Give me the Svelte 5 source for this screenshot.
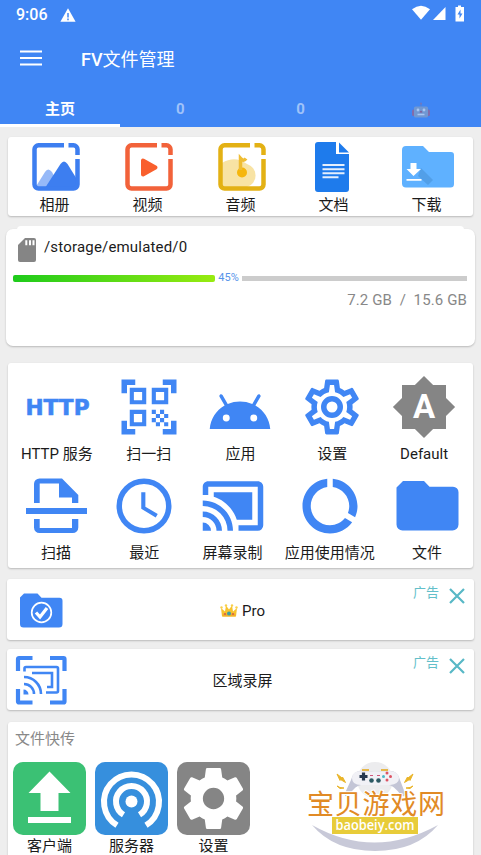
<script>
	/**
	 * @typedef {Object} Entry
	 * @property {string} icon - Icon name, see the icon snippet
	 * @property {string} label - Text under the icon
	 */

	/** @type {Entry[]} */
	const media = [
		{ icon: 'album', label: '相册' },
		{ icon: 'video', label: '视频' },
		{ icon: 'audio', label: '音频' },
		{ icon: 'document', label: '文档' },
		{ icon: 'download', label: '下载' },
	];

	/** @type {Entry[][]} */
	const tools = [
		[
			{ icon: 'http', label: 'HTTP 服务' },
			{ icon: 'qr', label: '扫一扫' },
			{ icon: 'android', label: '应用' },
			{ icon: 'settings', label: '设置' },
			{ icon: 'brightness', label: 'Default' },
		],
		[
			{ icon: 'scan', label: '扫描' },
			{ icon: 'clock', label: '最近' },
			{ icon: 'cast', label: '屏幕录制' },
			{ icon: 'usage', label: '应用使用情况' },
			{ icon: 'folder', label: '文件' },
		],
	];

	const transfer = [
		{ icon: 'upload', label: '客户端', tone: 'green' },
		{ icon: 'hotspot', label: '服务器', tone: 'blue' },
		{ icon: 'gear', label: '设置', tone: 'gray' },
	];

	const tabs = ['主页', '0', '0', 'robot'];
	let activeTab = $state(0);
	let ads = $state([
		{ id: 'pro', icon: 'folderCheck', label: 'Pro' },
		{ id: 'region', icon: 'regionCast', label: '区域录屏' },
	]);

	const storage = { path: '/storage/emulated/0', used: 7.2, total: 15.6, percent: 45 };

	/** @param {string} id */
	function closeAd(id) {
		ads = ads.filter((ad) => ad.id !== id);
	}
</script>

{#snippet frame(color)}
	<path
		d="M32 2.300H6.500a4 4 0 0 0-4 4v35.200a4 4 0 0 0 4 4h35a4 4 0 0 0 4-4V16M36.500 2.300H41.500a4 4 0 0 1 4 4V12"
		fill="none"
		stroke={color}
		stroke-width="4.500" />
{/snippet}

{#snippet icon(name)}
	{#if name === 'album'}
		<svg width="48" height="48" viewBox="0 0 48 48">
			<path d="M3 45 13 29q3-5 7 0l8 16z" fill="#96b9f8" />
			<path d="M13 45 28.500 21q3.500-5 7 0L46 38v7z" fill="#3d7ef0" />
			{@render frame('#3d7ef0')}
		</svg>
	{:else if name === 'video'}
		<svg width="48" height="48" viewBox="0 0 48 48">
			{@render frame('#f2623a')}
			<path d="M18 17.500v14l12.500-7z" fill="#f95f2d" stroke="#f95f2d" stroke-width="4" stroke-linejoin="round" />
		</svg>
	{:else if name === 'audio'}
		<svg width="48" height="48" viewBox="0 0 48 48">
			<path d="M4 20q13-8 25 1a12 12 0 0 1 0 23H4z" fill="#f8e3a4" />
			{@render frame('#e3b114')}
			<circle cx="24" cy="29.500" r="5" fill="#f6b60c" />
			<path d="M22.500 27V15.500q3 3.500 5.500 0" fill="none" stroke="#efbd33" stroke-width="3.500" />
		</svg>
	{:else if name === 'document'}
		<svg width="48" height="50" viewBox="0 0 48 50">
			<path d="M8 0h18v12h13v35a3 3 0 0 1-3 3H8a3 3 0 0 1-3-3V3a3 3 0 0 1 3-3z" transform="translate(-1 0)" fill="#1e7bec" />
			<path d="m28 0.500 10 10H28z" fill="#1e7bec" />
			<path d="M11.500 23h22M11.500 27.300h22M11.500 31.300h22M11.500 35.300h16" stroke="#e4effd" stroke-width="2" />
		</svg>
	{:else if name === 'download'}
		<svg width="52" height="42" viewBox="0 0 52 42">
			<path d="M4 0h17l6 6h22a3 3 0 0 1 3 3v29a3.500 3.500 0 0 1-3.500 3.500H4A4 4 0 0 1 0 37.500V4a4 4 0 0 1 4-4z" fill="#5fb1ff" />
			<path d="m19 22 12 12-5 5-10-9z" fill="#529fe8" />
			<path d="M8.500 17h6v6H19l-7.500 7L4.500 23h4zM4.500 33h15v1.700h-15z" fill="#fff" />
		</svg>
	{:else if name === 'http'}
		<svg width="66" height="66" viewBox="0 0 66 66">
			<text class="http" x="1.500" y="41" textLength="64" lengthAdjust="spacingAndGlyphs">HTTP</text>
		</svg>
	{:else if name === 'qr'}
		<svg width="66" height="66" viewBox="0 0 24 24" fill="currentColor">
			<path
				d="M9.500 6.500v3h-3v-3h3M11 5H5v6h6V5zm-1.500 9.500v3h-3v-3h3M11 13H5v6h6v-6zm6.500-6.500v3h-3v-3h3M19 5h-6v6h6V5zM13 13h1.500v1.500H13zM14.500 14.500H16V16h-1.500zM16 13h1.500v1.500H16zM13 16h1.500v1.500H13zM14.500 17.500H16V19h-1.500zM16 16h1.500v1.500H16zM17.500 14.500H19V16h-1.500zM17.500 17.500H19V19h-1.500zM22 7h-2V4h-3V2h5v5zm0 15v-5h-2v3h-3v2h5zM2 22h5v-2H4v-3H2v5zM2 2v5h2V4h3V2H2z" />
		</svg>
	{:else if name === 'android'}
		<svg width="66" height="66" viewBox="0 -2 24 24" fill="currentColor">
			<path
				d="M17.600 9.480l1.840-3.180c.16-.31.04-.69-.26-.85-.29-.15-.65-.06-.83.22l-1.880 3.240c-2.860-1.210-6.080-1.210-8.940 0L5.650 5.670c-.19-.29-.58-.38-.87-.2-.28.18-.37.54-.22.83L6.400 9.480C3.300 11.250 1.280 14.440 1 18h22c-.28-3.560-2.300-6.750-5.400-8.520z" />
			<circle cx="7" cy="14" r="1.250" fill="#fff" />
			<circle cx="17" cy="14" r="1.250" fill="#fff" />
		</svg>
	{:else if name === 'settings'}
		<svg width="66" height="66" viewBox="0 0 24 24" fill="currentColor">
			<path
				d="M12,8A4,4 0 0,1 16,12A4,4 0 0,1 12,16A4,4 0 0,1 8,12A4,4 0 0,1 12,8M12,10A2,2 0 0,0 10,12A2,2 0 0,0 12,14A2,2 0 0,0 14,12A2,2 0 0,0 12,10M10,22C9.75,22 9.54,21.82 9.5,21.58L9.13,18.93C8.5,18.68 7.96,18.34 7.44,17.94L4.95,18.95C4.73,19.03 4.46,18.95 4.34,18.73L2.34,15.27C2.21,15.05 2.27,14.78 2.46,14.63L4.57,12.97L4.5,12L4.57,11L2.46,9.37C2.27,9.22 2.21,8.95 2.34,8.73L4.34,5.27C4.46,5.05 4.73,4.96 4.95,5.05L7.44,6.05C7.96,5.66 8.5,5.32 9.13,5.07L9.5,2.42C9.54,2.18 9.75,2 10,2H14C14.25,2 14.46,2.18 14.5,2.42L14.87,5.07C15.5,5.32 16.04,5.66 16.56,6.05L19.05,5.05C19.27,4.96 19.54,5.05 19.66,5.27L21.66,8.73C21.79,8.95 21.73,9.22 21.54,9.37L19.43,11L19.5,12L19.43,13L21.54,14.63C21.73,14.78 21.79,15.05 21.66,15.27L19.66,18.73C19.54,18.95 19.27,19.04 19.05,18.95L16.56,17.95C16.04,18.34 15.5,18.68 14.87,18.93L14.5,21.58C14.46,21.82 14.25,22 14,22H10M11.25,4L10.88,6.61C9.68,6.86 8.62,7.5 7.85,8.39L5.44,7.35L4.69,8.65L6.8,10.2C6.4,11.37 6.4,12.64 6.8,13.8L4.68,15.36L5.43,16.66L7.86,15.62C8.63,16.5 9.68,17.14 10.87,17.38L11.24,20H12.76L13.13,17.39C14.32,17.14 15.37,16.5 16.14,15.62L18.57,16.66L19.32,15.36L17.2,13.81C17.6,12.64 17.6,11.37 17.2,10.2L19.31,8.65L18.56,7.35L16.15,8.39C15.38,7.5 14.32,6.86 13.12,6.62L12.75,4H11.25Z" />
		</svg>
	{:else if name === 'brightness'}
		<svg width="66" height="66" viewBox="0 0 66 66">
			<path d="M55 23.900V11H42.100L33 1.900 23.900 11H11v12.900L1.900 33l9.100 9.100V55h12.900l9.100 9.100 9.100-9.100H55V42.100l9.100-9.100z" fill="#858585" />
			<text class="auto" x="33" y="44" text-anchor="middle">A</text>
		</svg>
	{:else if name === 'scan'}
		<svg width="66" height="66" viewBox="0 0 66 66" fill="currentColor">
			<path d="M11 30V11a5.500 5.500 0 0 1 5.500-5.500H39L55.300 22v8H49v-5.500H36v-14H16.700V30zM3 35h61v6H3zM11 46h5.700v9H49v-9h6.300v8.500a5.500 5.500 0 0 1-5.500 5.500H16.500a5.500 5.500 0 0 1-5.500-5.500z" />
		</svg>
	{:else if name === 'clock'}
		<svg width="66" height="66" viewBox="0 0 24 24" fill="currentColor">
			<circle cx="12" cy="12" r="9" fill="none" stroke="currentColor" stroke-width="2" />
			<path d="M12.500 7v5.250L17 14.920l-.75 1.230L11 13V7z" />
		</svg>
	{:else if name === 'cast'}
		<svg width="66" height="66" viewBox="0 0 24 24" fill="currentColor">
			<path
				d="M21,3H3C1.89,3 1,3.89 1,5V8H3V5H21V19H14V21H21A2,2 0 0,0 23,19V5C23,3.89 22.1,3 21,3M1,10V12A9,9 0 0,1 10,21H12C12,14.92 7.07,10 1,10M19,7H5V8.63C8.96,9.91 12.09,13.04 13.37,17H19M1,14V16A5,5 0 0,1 6,21H8A7,7 0 0,0 1,14M1,18V21H4A3,3 0 0,0 1,18Z" />
		</svg>
	{:else if name === 'usage'}
		<svg width="66" height="66" viewBox="0 0 24 24" fill="currentColor">
			<path
				d="M13 2.050v3.030c3.390.49 6 3.390 6 6.920 0 .9-.18 1.750-.48 2.540l2.600 1.530c.56-1.240.88-2.620.88-4.070 0-5.180-3.950-9.450-9-9.950zM12 19c-3.870 0-7-3.130-7-7 0-3.530 2.610-6.430 6-6.920V2.050c-5.060.5-9 4.760-9 9.950 0 5.520 4.470 10 9.990 10 3.310 0 6.240-1.610 8.060-4.090l-2.600-1.530C16.170 17.980 14.210 19 12 19z" />
		</svg>
	{:else if name === 'folder'}
		<svg width="66" height="66" viewBox="0 0 66 66" fill="currentColor">
			<path d="M9 8h21l5.500 5.700H59a5.500 5.500 0 0 1 5.500 5.500V51.500a6 6 0 0 1-6 6H8.500a6 6 0 0 1-6-6V14.500z" />
		</svg>
	{:else if name === 'folderCheck'}
		<svg width="54" height="54" viewBox="0 0 54 54">
			<path d="M10 10.500h13.500l4 4.300h18a3 3 0 0 1 3 3v23.200a3.500 3.500 0 0 1-3.500 3.500H9.500a3.500 3.500 0 0 1-3.500-3.500V14.500z" fill="currentColor" />
			<circle cx="27.500" cy="29.500" r="9.800" fill="none" stroke="#fff" stroke-width="1.700" />
			<path d="m22 29.500 4 4.500 7-9" fill="none" stroke="#fff" stroke-width="3.200" />
		</svg>
	{:else if name === 'regionCast'}
		<svg width="54" height="54" viewBox="0 0 54 54" fill="none" stroke="currentColor">
			<path d="M4 18V6a1 1 0 0 1 1-1H18.500M36 5h13.500a1 1 0 0 1 1 1V18M50.500 36v12.500a1 1 0 0 1-1 1H36M18.500 49.500H5a1 1 0 0 1-1-1V36" stroke-width="4.200" />
			<path d="M10.500 18.500V15.500q0-1.500 1.500-1.500h30.500q1.500 0 1.500 1.500V38q0 1.500-1.500 1.500H32M18 20h20v14H33" stroke-width="2.600" />
			<path d="M10 24a17 17 0 0 1 17 17M10 31a10 10 0 0 1 10 10" stroke-width="2.600" />
			<path d="M9.500 36.500a5 5 0 0 1 5 5H9.500z" fill="currentColor" stroke="none" />
		</svg>
	{:else if name === 'upload'}
		<svg width="73" height="73" viewBox="0 0 73 73" fill="#fff">
			<path d="m36.500 9.500 21 21.500H45.500v18h-18V31h-12zM15 55h43v6H15z" />
		</svg>
	{:else if name === 'hotspot'}
		<svg width="73" height="73" viewBox="0 0 73 73" fill="none" stroke="#fff" stroke-width="6">
			<path d="M22 63.300a27.500 27.500 0 1 1 29 0M28.500 52.800a15.500 15.500 0 1 1 16 0" />
			<circle cx="36.500" cy="39.500" r="6" fill="#fff" stroke="none" />
		</svg>
	{:else if name === 'gear'}
		<svg width="73" height="73" viewBox="0 0 24 24" fill="#fff">
			<path
				fill-rule="evenodd"
				d="M12 8.500a3.500 3.500 0 1 0 0 7 3.500 3.500 0 0 0 0-7M10 22C9.750 22 9.540 21.820 9.500 21.580L9.130 18.930C8.500 18.680 7.960 18.340 7.440 17.940L4.950 18.950C4.730 19.030 4.460 18.950 4.340 18.730L2.340 15.270C2.210 15.050 2.270 14.780 2.460 14.630L4.570 12.970L4.500 12L4.570 11L2.460 9.370C2.270 9.220 2.210 8.950 2.340 8.730L4.340 5.270C4.460 5.050 4.730 4.960 4.950 5.050L7.440 6.050C7.960 5.660 8.500 5.320 9.130 5.070L9.500 2.420C9.540 2.180 9.750 2 10 2H14C14.250 2 14.460 2.180 14.500 2.420L14.870 5.070C15.500 5.320 16.040 5.660 16.560 6.050L19.050 5.050C19.270 4.960 19.540 5.050 19.660 5.270L21.660 8.730C21.790 8.950 21.730 9.220 21.540 9.370L19.430 11L19.500 12L19.430 13L21.540 14.630C21.730 14.780 21.790 15.050 21.660 15.270L19.660 18.730C19.540 18.950 19.270 19.040 19.050 18.950L16.560 17.950C16.040 18.340 15.500 18.680 14.870 18.930L14.500 21.580C14.460 21.820 14.250 22 14 22z" />
		</svg>
	{:else if name === 'crown'}
		<svg class="crown" width="18" height="14" viewBox="0 0 18 14">
			<path d="M2 12.500 1 4l4 3.500L6 1.500l3 4 3-4 1 6L17 4l-1 8.500z" fill="#f7c32e" />
			<path d="M2.500 9.500h13v3h-13z" fill="#f0b02a" />
			<circle cx="9" cy="9.500" r="2" fill="#3b9fa8" />
			<circle cx="5" cy="10" r="1" fill="#d65a48" />
			<circle cx="13" cy="10" r="1" fill="#d65a48" />
			<circle cx="1.500" cy="3.500" r="1.200" fill="#f9cf4a" />
			<circle cx="6" cy="1.500" r="1.200" fill="#f9cf4a" />
			<circle cx="12" cy="1.500" r="1.200" fill="#f9cf4a" />
			<circle cx="16.500" cy="3.500" r="1.200" fill="#f9cf4a" />
		</svg>
	{:else if name === 'robot'}
		<svg class="robot" width="18" height="16" viewBox="0 0 18 16">
			<path d="M9 2v3" stroke="#6d7fae" />
			<circle cx="9" cy="1.500" r="1" fill="#8a6fa8" />
			<rect x="0" y="7.500" width="18" height="6.500" rx="1.500" fill="#a0628c" />
			<rect x="2" y="4.500" width="14" height="11" rx="1.500" fill="#86a0c4" />
			<circle cx="6" cy="8" r="1.400" fill="#d5e3f5" />
			<circle cx="12" cy="8" r="1.400" fill="#d5e3f5" />
			<path d="m9 8.500 1.500 2h-3z" fill="#a33f62" />
			<path d="M5.500 12.500h7" stroke="#d5e3f5" stroke-width="1.500" />
		</svg>
	{/if}
{/snippet}

<div class="screen">
	<header>
		<div class="status">
			<span class="time">9:06</span>
			<svg width="16" height="14" viewBox="0 0 16 14">
				<path d="M8 .3 15.600 13.700H.4z" fill="#fff" />
				<path d="M8 5v4.500M8 10.500v1.700" stroke="#4086f4" stroke-width="1.500" />
			</svg>
			<svg class="signals" width="52" height="17" viewBox="0 0 52 17" fill="#fff">
				<path d="M0 4.200q9-7 18 0L9 14.800z" />
				<path d="M33.500 2v13H21z" />
				<path d="M46 .5h3V2h3v14.500h-8.500V2H46z" />
				<path d="m48.500 4.500-3 5h2v4l3-5h-2z" fill="#4086f4" />
			</svg>
		</div>
		<div class="toolbar">
			<button aria-label="菜单">
				<svg width="22" height="16" viewBox="0 0 22 16">
					<path d="M0 1.500h22M0 8h22M0 14.500h22" stroke="#fff" stroke-width="2.200" />
				</svg>
			</button>
			<h1>FV<span>文件管理</span></h1>
		</div>
		<nav>
			{#each tabs as tab, i}
				<button class:active={activeTab === i} onclick={() => (activeTab = i)}>
					{#if tab === 'robot'}
						{@render icon('robot')}
					{:else}
						{tab}
					{/if}
				</button>
			{/each}
		</nav>
	</header>

	<main>
		<section class="card media">
			{#each media as item}
				<div class="item">
					<div class="pic">{@render icon(item.icon)}</div>
					<span>{item.label}</span>
				</div>
			{/each}
		</section>

		<section class="card storage">
			<div class="path">
				<svg width="18" height="24" viewBox="0 0 18 24">
					<path d="M7 0h9a2 2 0 0 1 2 2v20a2 2 0 0 1-2 2H2a2 2 0 0 1-2-2V7z" fill="#858585" />
					<path d="M8.300 2.200v5M12 2.200v5M15.500 2.200v5" stroke="#fff" stroke-width="2" />
				</svg>
				<span>{storage.path}</span>
			</div>
			<div class="bar">
				<div class="used" style="width:{storage.percent * 0.988}%"></div>
				<span>{storage.percent}%</span>
				<div class="free"></div>
			</div>
			<p>{storage.used} GB&nbsp; /&nbsp; {storage.total} GB</p>
		</section>

		<section class="card tools">
			{#each tools as row}
				<div class="row">
					{#each row as item}
						<div class="item">
							{@render icon(item.icon)}
							<span>{item.label}</span>
						</div>
					{/each}
				</div>
			{/each}
		</section>

		{#each ads as ad (ad.id)}
			<section class="card ad">
				<div class="lead">{@render icon(ad.icon)}</div>
				<div class="name">
					{#if ad.id === 'pro'}{@render icon('crown')}{/if}
					<span>{ad.label}</span>
				</div>
				<div class="tag">
					<span>广告</span>
					<button aria-label="关闭" onclick={() => closeAd(ad.id)}>
						<svg width="16" height="16" viewBox="0 0 16 16">
							<path d="m1 1 14 14M15 1 1 15" stroke="#58b8c6" stroke-width="2.200" />
						</svg>
					</button>
				</div>
			</section>
		{/each}

		<section class="card transfer">
			<h2>文件快传</h2>
			<div class="tiles">
				{#each transfer as item}
					<div class="item">
						<div class="tile {item.tone}">{@render icon(item.icon)}</div>
						<span>{item.label}</span>
					</div>
				{/each}
			</div>
		</section>
	</main>

	<!-- site badge floating over the last card -->
	<svg class="badge" width="146" height="92" viewBox="0 0 146 92">
		<path d="M7 66q62 35 126 0Q111 92 70 92T7 66z" fill="#c8c9d8" />
		<circle cx="70" cy="21" r="18" fill="#ececee" />
		<path d="M57 11h7M76 11h7" stroke="#e6b84b" stroke-width="2" />
		<path d="M56 12q14 2 29 0 8 0 10 9l5 13q0 5-4 2-8-10-12-10H56q-5 0-12 10-5 3-4-2l6-13q2-9 10-9z" fill="#c3c5d6" />
		<path d="M56 12q14 2 29 0 9 1 9 7t-9 7H56q-9 0-9-7t9-7z" fill="#f1f1f6" />
		<path d="M58.500 13.500v8M54.500 17.500h8" stroke="#26384f" stroke-width="3.200" />
		<circle cx="66.500" cy="21.500" r="2.300" fill="#2b5963" />
		<circle cx="73.500" cy="21.500" r="2.300" fill="#2b5963" />
		<circle cx="82" cy="14" r="1.500" fill="#dc5363" />
		<circle cx="82" cy="21" r="1.500" fill="#dc5363" />
		<circle cx="78.500" cy="17.500" r="1.500" fill="#49b7c6" />
		<circle cx="85.500" cy="17.500" r="1.500" fill="#dc5363" />
		<path d="M65 16.500h3M72 16.500h3" stroke="#d2577b" />
		<path d="m32 15 5 4 .5-1 3 5.500-5-3-.5 1zM108 15l-5 4-.5-1-3 5.500 5-3 .5 1zM32 27l3 1.500 4 .5-4 .5zM108 27l-3 1.500-4 .5 4 .5z" fill="#eab529" stroke="#eab529" />
		<text class="site" x="2" y="54.500" textLength="138">宝贝游戏网</text>
		<rect x="27" y="58" width="86" height="17" fill="#e8cc39" />
		<text class="domain" x="70" y="71" text-anchor="middle" textLength="79" lengthAdjust="spacingAndGlyphs">baobeiy.com</text>
	</svg>
</div>

<style>
	:global(body) {
		background: #eee;
	}

	.screen {
		position: relative;
		height: 855px;
		overflow: hidden;
		background: #eee;
		color: #1b1b1b;
		font: 15px/20px Roboto, 'Noto Sans CJK SC', sans-serif;
	}

	button {
		padding: 0;
		border: 0;
		background: none;
		color: inherit;
		font: inherit;
	}

	svg {
		display: block;
		flex: none;
	}

	header {
		height: 127px;
		background: #4086f4;
		color: #fff;
	}

	.status {
		display: flex;
		align-items: center;
		gap: 12px;
		height: 29px;
		padding: 0 17px 0 16px;

		.time {
			font-size: 16px;
			font-weight: 500;
		}

		.signals {
			margin: -2px 0 0 auto;
		}
	}

	.toolbar {
		display: flex;
		align-items: center;
		gap: 39px;
		height: 60px;
		padding-left: 20px;

		button {
			margin-top: -2px;
		}

		h1 {
			margin: 1px 0 0;
			font-size: 18px;
			font-weight: 500;
			line-height: 24px;
		}

		h1 span {
			font-weight: 400;
		}
	}

	nav {
		display: grid;
		grid-template-columns: repeat(4, 1fr);
		height: 38px;

		button {
			display: flex;
			align-items: center;
			justify-content: center;
			padding-top: 5px;
			border-bottom: 3px solid transparent;
			color: #9fc2f9;
			font-weight: 700;
		}

		.active {
			color: #fff;
			border-color: #fff;
		}

		.robot {
			margin-top: 1px;
			opacity: 0.7;
		}
	}

	main {
		display: flex;
		flex-direction: column;
		padding: 10px 7px 0;
	}

	.card {
		background: #fff;
		border-radius: 3px;
		box-shadow: 0 1px 2px rgba(0, 0, 0, 0.22);
	}

	.item {
		display: flex;
		flex-direction: column;
		align-items: center;
		white-space: nowrap;
	}

	.media {
		display: grid;
		grid-template-columns: repeat(5, 1fr);
		height: 79px;
		margin: 0 1px;

		.pic {
			display: flex;
			align-items: center;
			height: 50px;
			margin: 5px 0 3px 2px;
		}
	}

	.storage {
		position: relative;
		height: 117px;
		margin: 13px -1px 0;
		padding: 0 7px;
		box-sizing: border-box;
		border-radius: 7px;

		/* back card peeking out over the top edge */
		&::before {
			content: '';
			position: absolute;
			top: -3px;
			left: 11px;
			right: 11px;
			height: 6px;
			border-radius: 4px 4px 0 0;
			background: #fff;
		}

		.path {
			display: flex;
			gap: 8px;
			padding: 9px 0 0 5px;
			letter-spacing: 0.18px;

			span {
				margin-top: -1px;
			}
		}

		.bar {
			display: flex;
			align-items: center;
			height: 12px;
			margin-top: 10px;
		}

		.used {
			flex: none;
			height: 7px;
			border-radius: 2px;
			background: linear-gradient(90deg, #1ecb1b, #98eb10);
		}

		.bar span {
			margin: 0 3px;
			color: #5794ea;
			font-size: 11px;
			line-height: 12px;
		}

		.free {
			flex: 1;
			height: 5px;
			margin-right: 1px;
			background: #ccc;
		}

		p {
			margin: 6px 1px 0 0;
			color: #888;
			letter-spacing: 0.12px;
			text-align: right;
		}
	}

	.tools {
		height: 205px;
		margin: 17px 1px 0;
		padding: 11px 2px 0 4px;
		box-sizing: border-box;
		color: #4086f4;

		.row {
			display: flex;
			height: 99px;
		}

		.row:first-child {
			margin: 0 1px 0 -1px;
		}

		.item {
			flex: 1 1 88px;
			min-width: max-content;
			padding: 0 8px;
			box-sizing: border-box;
		}

		span {
			margin-top: 4px;
			color: #1b1b1b;
		}

		.http {
			fill: #4086f4;
			stroke: #4086f4;
			stroke-width: 0.6px;
			font: bold 22px 'DejaVu Sans', sans-serif;
		}

		.auto {
			fill: #fff;
			font: bold 33px Roboto, sans-serif;
		}
	}

	.ad {
		display: grid;
		grid-template-columns: 1fr auto 1fr;
		height: 61px;
		margin-top: 9px;

		.lead {
			padding: 4px 0 0 7px;
			color: #4086f4;
		}

		.name {
			display: flex;
			align-items: center;
			gap: 4px;
			padding: 2px 0 0 4px;
		}

		.tag {
			display: flex;
			gap: 10px;
			justify-content: flex-end;
			align-items: flex-start;
			padding: 4px 9px 0 0;
			color: #63bfca;
			font-size: 13px;
		}

		.tag button {
			margin-top: 5px;
		}
	}

	.tools + .ad {
		margin-top: 11px;
	}

	.transfer {
		height: 150px;
		margin: 12px 1px 0;
		padding: 7px 5px 0;

		h2 {
			margin: 0 0 13px 2px;
			color: #888;
			font-size: 15px;
			font-weight: 400;
		}

		.tiles {
			display: flex;
			gap: 9px;
		}

		.tile {
			margin-bottom: 1px;
			border-radius: 10px;
		}

		.green {
			background: #3bc174;
		}

		.blue {
			background: #368fdd;
		}

		.gray {
			background: #858585;
		}
	}

	.badge {
		position: absolute;
		left: 305px;
		top: 759px;

		.site {
			fill: #e18a25;
			stroke: #fff;
			stroke-width: 2px;
			paint-order: stroke;
			font: 400 27px 'Noto Sans CJK SC', sans-serif;
		}

		.domain {
			fill: #fff;
			font: 600 14px 'Open Sans', sans-serif;
		}
	}
</style>
